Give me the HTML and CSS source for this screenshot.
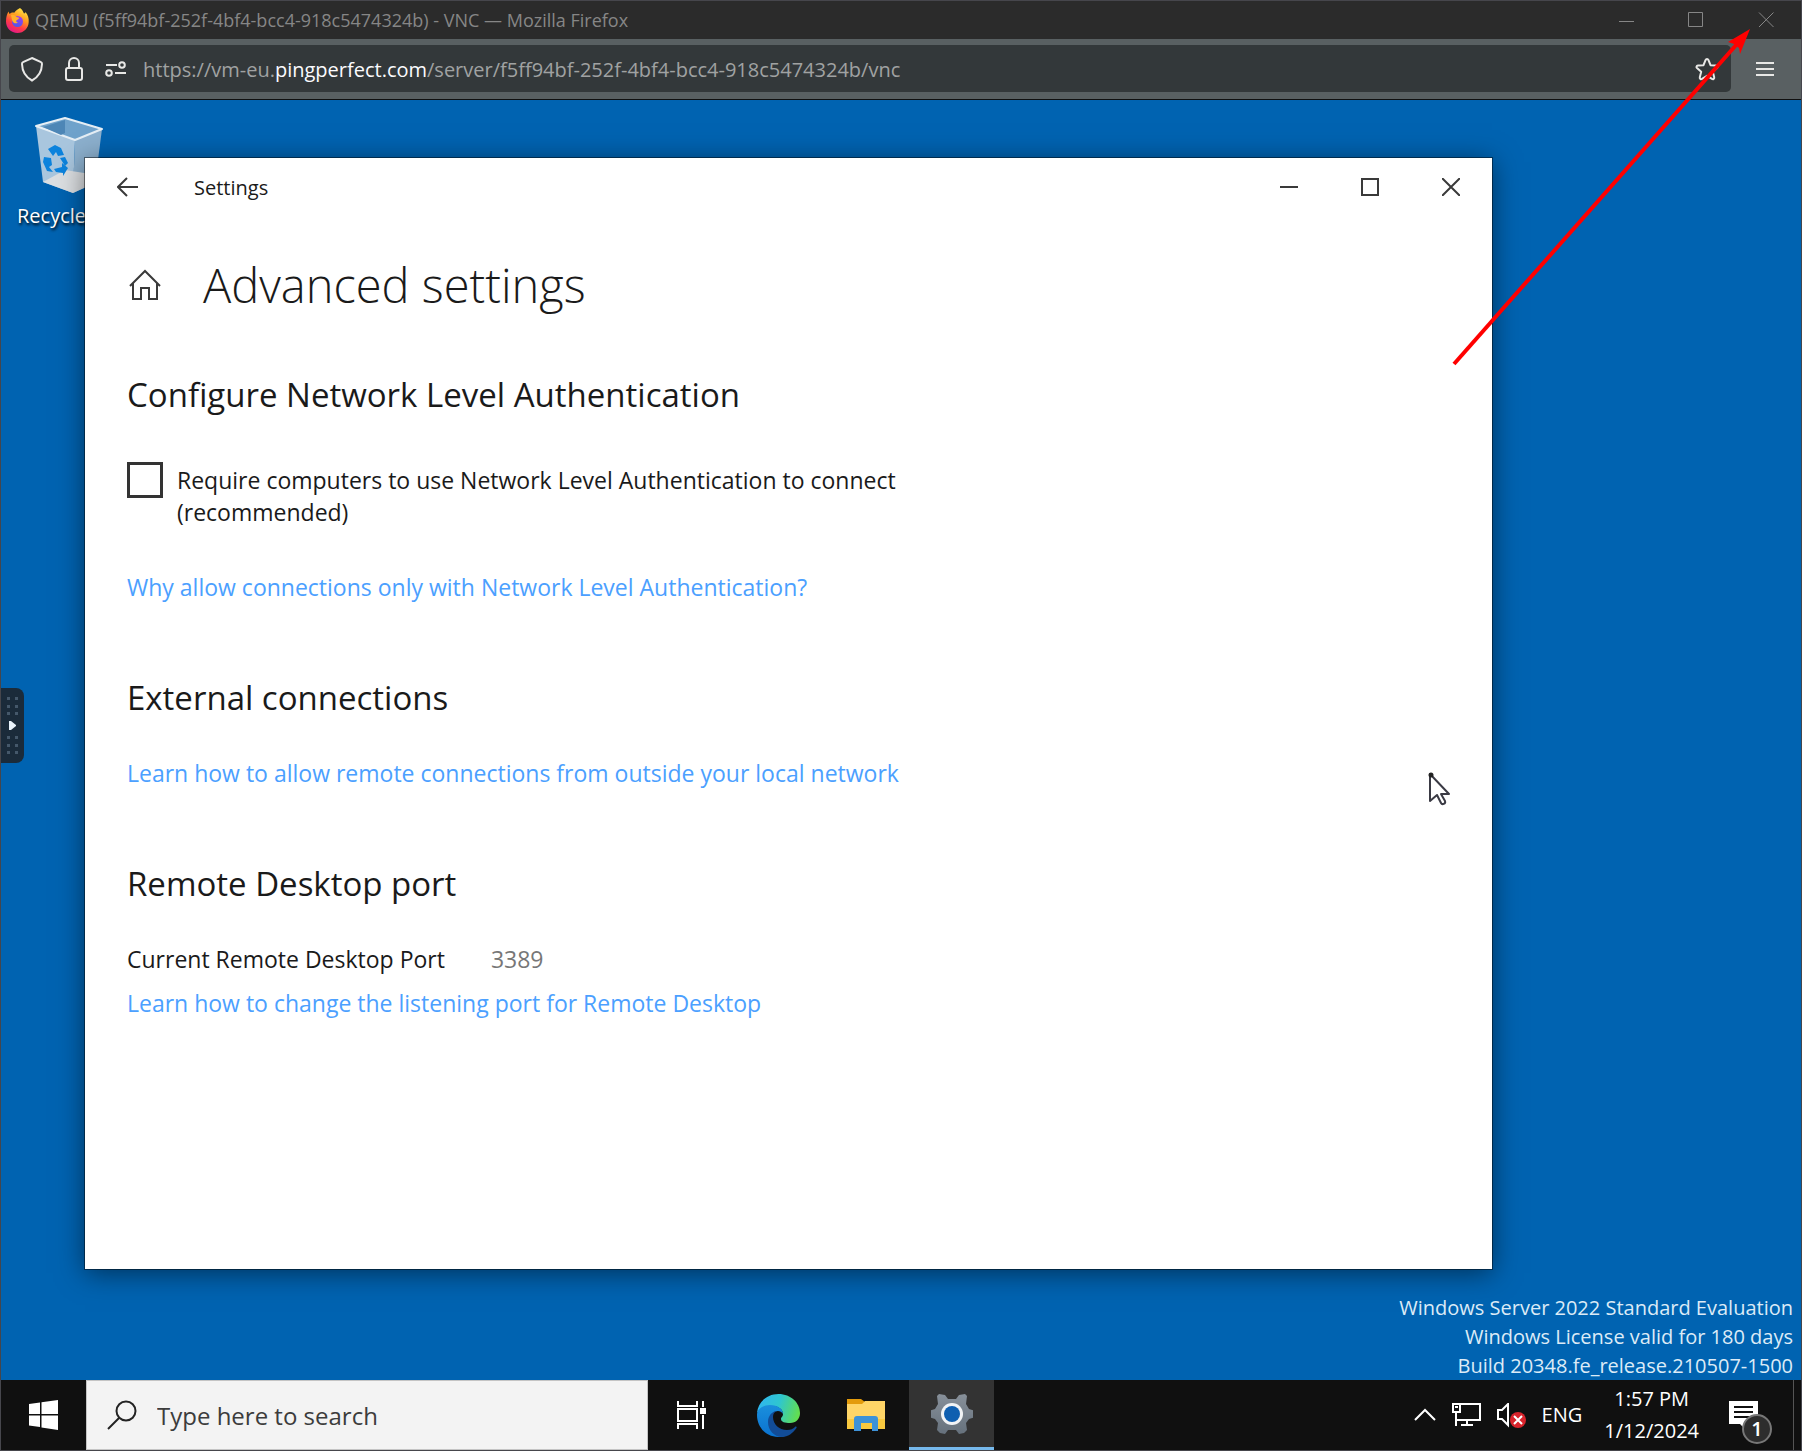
FILE: index.html
```html
<!DOCTYPE html>
<html lang="en">
<head>
<meta charset="utf-8">
<title>QEMU - VNC</title>
<link rel="stylesheet" href="styles.css">
</head>
<body>
<div class="browser">
  <header class="titlebar">
    <svg class="firefox" width="23" height="25" viewBox="0 0 23 25" aria-hidden="true">
      <defs>
        <linearGradient id="fxa" x1="0.8" y1="0" x2="0.3" y2="1"><stop offset="0" stop-color="#fff04a"/><stop offset="0.4" stop-color="#ff9a1f"/><stop offset="0.7" stop-color="#ff3a48"/><stop offset="1" stop-color="#e3168a"/></linearGradient>
        <linearGradient id="fxb" x1="0.6" y1="0" x2="0.3" y2="1"><stop offset="0" stop-color="#a03bf0"/><stop offset="1" stop-color="#4a5ae8"/></linearGradient>
      </defs>
      <path fill="url(#fxa)" d="M14 0c3 2 3 4 4 5.500c1-.2 1.500-1 1.500-1.500c2.500 3 3.500 6 3.200 10C22.500 20 18 25 11.500 25S0 20 0 13.500C0 9 1 6 2.500 3.500c.3 1.200.8 2 1.200 2.500c1.500-1.500 3-1.500 4.500-1.300c1.500-2.200 3.500-3.200 5.800-4.700z"/>
      <circle cx="11.500" cy="13.500" r="5.500" fill="url(#fxb)"/>
      <path fill="#ffb12a" d="M5 7c2.500-1 4.500.5 5.500 2c1.500.2 2.500.6 2.700 1.200c-.8 1.300-3 1.500-3 2.800c0 1 1 1.500 2 1.500c-1.500 1.500-5 1-6-2C5.500 10.500 5.500 9 5 7z"/>
    </svg>
    <span class="titlebar-text">QEMU (f5ff94bf-252f-4bf4-bcc4-918c5474324b) - VNC — Mozilla Firefox</span>
    <div class="browser-controls">
      <button type="button" aria-label="Minimize"><svg width="16" height="16" viewBox="0 0 16 16"><path d="M1 9.500h15"/></svg></button>
      <button type="button" aria-label="Maximize"><svg width="16" height="16" viewBox="0 0 16 16"><path d="M.5.500h14v14H.5z"/></svg></button>
      <button type="button" aria-label="Close"><svg width="16" height="16" viewBox="0 0 16 16"><path d="M1 .5l14.500 14.500M15.500 .5L1 15"/></svg></button>
    </div>
  </header>

  <div class="toolbar">
    <div class="urlbar">
      <button type="button" aria-label="Tracking protection"><svg width="24" height="26" viewBox="0 0 24 26"><path d="M12 2l9 4.200c.8.300 1 1 1 1.800c-.2 7-3.500 13-10 16.500C5.500 21 2.200 15 2 8c0-.8.200-1.500 1-1.800z"/></svg></button>
      <button type="button" aria-label="Site security"><svg width="20" height="26" viewBox="0 0 20 26"><rect x="2" y="12" width="16" height="12" rx="2"/><path d="M5 12V7a5 5 0 0 1 10 0v5"/></svg></button>
      <button type="button" aria-label="Site permissions"><svg width="24" height="18" viewBox="0 0 24 18"><path d="M2 5h11M11 13h11"/><circle cx="18" cy="5" r="2.800"/><circle cx="5" cy="13" r="2.800"/></svg></button>
      <a class="address" href="#">https://vm-eu.<b>pingperfect.com</b>/server/f5ff94bf-252f-4bf4-bcc4-918c5474324b/vnc</a>
      <button type="button" class="star" aria-label="Bookmark"><svg width="24" height="24" viewBox="0 0 24 24"><path stroke-linejoin="round" d="M12 2c.7 0 1.200.5 1.500 1.200l2 5l5.600.4c1.400.1 1.900 1.600.9 2.500l-4.200 3.600l1.400 5.600c.3 1.300-1 2.300-2.200 1.600L12 18.800l-5 3.100c-1.200.7-2.500-.3-2.200-1.600l1.400-5.600L2 11.100c-1-.9-.5-2.400.9-2.500l5.600-.4l2-5C10.800 2.500 11.300 2 12 2z"/></svg></button>
    </div>
    <button type="button" class="menu" aria-label="Menu"><svg width="18" height="16" viewBox="0 0 18 16"><path d="M0 2h18M0 8h18M0 14h18"/></svg></button>
  </div>

  <main class="desktop">
    <div class="recycle">
      <svg width="70" height="78" viewBox="0 0 70 78" aria-hidden="true">
        <path fill="#a9c6de" d="M2 10l39 14l-2 53L9 66z"/>
        <path fill="#8cb0ce" d="M41 24l27-11l-7 54l-22 10z"/>
        <path fill="#dcdfe2" d="M9 66l22-12l32 5l-2 8l-22 10z"/>
        <path fill="#6fa2cb" stroke="#e5eef5" stroke-width="2" stroke-linejoin="round" d="M2 10L31 2l37 11l-27 11z"/>
        <path fill="#4d86b6" d="M9 11l22-7v13l-4 2z"/>
        <g fill="#0c83dd"><path d="M14 33l7-4l6 3l3 7l-6 1l-2-4l-3 4z"/><path d="M10 41l7 1l1 7l-3 2l4 5l-6-1l-4-9z"/><path d="M20 53l8-2v-4l6 5l-5 8v-3l-7-1z"/><path d="M26 42l5-1l3 6l-3 3z"/></g>
      </svg>
      <span>Recycle Bin</span>
    </div>

    <button type="button" class="vnc-handle" aria-label="Show control bar">
      <svg width="24" height="75" viewBox="0 0 24 75">
        <g fill="#45586a"><path d="M7 9h3v3H7zM15 9h3v3h-3zM7 17h3v3H7zM15 17h3v3h-3zM7 24h3v3H7zM15 24h3v3h-3zM7 48h3v3H7zM15 48h3v3h-3zM7 56h3v3H7zM15 56h3v3h-3zM7 63h3v3H7zM15 63h3v3h-3z"/></g>
        <path fill="#e8f2fb" d="M9 33h2l5 4v1l-5 4H9z"/>
      </svg>
    </button>

    <section class="window">
      <div class="window-bar">
        <button type="button" class="back" aria-label="Back"><svg width="22" height="20" viewBox="0 0 22 20"><path d="M1 10h20M10 1l-9 9l9 9"/></svg></button>
        <span class="window-title">Settings</span>
        <div class="window-controls">
          <button type="button" aria-label="Minimize"><svg width="18" height="18" viewBox="0 0 18 18"><path d="M0 9h18"/></svg></button>
          <button type="button" aria-label="Maximize"><svg width="18" height="18" viewBox="0 0 18 18"><path d="M1 1h16v16H1z"/></svg></button>
          <button type="button" aria-label="Close"><svg width="18" height="18" viewBox="0 0 18 18"><path d="M0 0l18 18M18 0L0 18"/></svg></button>
        </div>
      </div>
      <div class="window-head">
        <svg width="32" height="32" viewBox="0 0 32 32" aria-hidden="true"><path d="M1 17L16 2l15 15M4 14v16h8V19h8v11h8V14"/></svg>
        <h1>Advanced settings</h1>
      </div>
      <h2>Configure Network Level Authentication</h2>
      <label class="check"><input type="checkbox"><span>Require computers to use Network Level Authentication to connect (recommended)</span></label>
      <a class="why" href="#">Why allow connections only with Network Level Authentication?</a>
      <h2>External connections</h2>
      <a class="external" href="#">Learn how to allow remote connections from outside your local network</a>
      <h2>Remote Desktop port</h2>
      <p class="port"><span>Current Remote Desktop Port</span><span class="value">3389</span></p>
      <a href="#">Learn how to change the listening port for Remote Desktop</a>
    </section>

    <p class="watermark">Windows Server 2022 Standard Evaluation<br>Windows License valid for 180 days<br>Build 20348.fe_release.210507-1500</p>

    <svg class="cursor" width="24" height="36" viewBox="0 0 24 36" aria-hidden="true"><path fill="#fff" stroke="#3a3a44" stroke-width="2" stroke-linejoin="round" d="M2 2v27l7-6l4 8c1 2 5 1 4-2l-4-7h8z"/><circle cx="3" cy="3" r="2.500" fill="#222"/></svg>
  </main>

  <footer class="taskbar">
    <button type="button" class="start" aria-label="Start"><svg width="29" height="30" viewBox="0 0 29 30"><path fill="#fff" d="M0 4l11-1.500v11.500H0zM12.500 2.200L29 0v14H12.500zM0 15.500h11v11.500L0 25.500zM12.500 15.500H29V30l-16.500-2.500z"/></svg></button>
    <label class="search">
      <svg width="30" height="30" viewBox="0 0 30 30" aria-hidden="true"><circle cx="19" cy="11" r="9.500"/><path d="M12 18L1 29"/></svg>
      <input type="text" placeholder="Type here to search" aria-label="Type here to search">
    </label>
    <button type="button" class="task" aria-label="Task view"><svg width="30" height="28" viewBox="0 0 30 28"><path fill="none" stroke="#fff" stroke-width="2" d="M1 0v5h19V0M1 28v-5h19v5M1 8h19v12H1zM26 0v6M26 14v14"/><path fill="#fff" d="M23 7h6v6h-6z"/></svg></button>
    <button type="button" class="task" aria-label="Microsoft Edge">
      <svg width="43" height="43" viewBox="0 0 43 43">
        <defs>
          <linearGradient id="ea" x1="0" y1="0.3" x2="1" y2="0.5"><stop offset="0" stop-color="#2fb5f0"/><stop offset="0.5" stop-color="#2fc6cf"/><stop offset="1" stop-color="#62de50"/></linearGradient>
          <linearGradient id="eb" x1="0.5" y1="0" x2="0.5" y2="1"><stop offset="0" stop-color="#1a8fdc"/><stop offset="1" stop-color="#0a72d0"/></linearGradient>
        </defs>
        <path fill="url(#ea)" d="M0 19C1 8 10 0 21.500 0C34 0 43 9 43 19c0 6-4 10-10 10c-5 0-9-1-9-4c0-2 2-2 2-5c0-5-5-8-11-8C8 12 2 15 0 19z"/>
        <path fill="url(#eb)" d="M0 21c0-6 6-10 13-10c8 0 13 4 13 9c-1-2-3-3-5-3c-5 0-8 5-8 10c0 8 7 15 15 15c-2 1-4 1-7 1C9 43 0 33 0 21z"/>
        <path fill="#124c97" d="M20 17c-3 1-4 3-4 6c0 7 6 13 14 13c4 0 6-1 8-3c1-1 2 0 1.500 1C36 39 31 43 25 43c-8 0-14-7-14-15c0-6 4-11 9-11z"/>
      </svg>
    </button>
    <button type="button" class="task" aria-label="File Explorer">
      <svg width="38" height="32" viewBox="0 0 38 32"><path fill="#e39b0c" d="M0 0h14l4 3v5H0z"/><path fill="#ffd567" d="M0 5h15l3-3h20v28H0z"/><path fill="#f9c93f" d="M0 20h38v10H0z"/><path fill="#3d92d8" d="M7 20c0-2 1-3 3-3h18c2 0 3 1 3 3v12h-6v-8H14v8H7z"/></svg>
    </button>
    <button type="button" class="task active" aria-label="Settings">
      <svg width="42" height="40" viewBox="-21 -20 42 40"><defs><linearGradient id="ga" x1="0" y1="0" x2="0" y2="1"><stop offset="0" stop-color="#87909a"/><stop offset="1" stop-color="#66717c"/></linearGradient></defs><path fill="url(#ga)" d="M-13-20l6 1l3 4h8l3-4l6-1l2 2l-1 8l3 5l6 2v6l-6 2l-3 4l1 7l-3 3l-5 1l-3-4h-8l-3 4l-5-1l-3-3l1-7l-3-4l-6-2v-6l6-2l3-5l-1-8z"/><circle r="11" fill="#f1f3f5"/><circle r="8" fill="#0f5fb0"/></svg>
    </button>
    <div class="tray">
      <button type="button" aria-label="Show hidden icons"><svg width="22" height="14" viewBox="0 0 22 14"><path d="M1 12L11 2l10 10"/></svg></button>
      <button type="button" aria-label="Network"><svg width="29" height="24" viewBox="0 0 29 24"><path d="M9 1h19v16H5M15 17v5M9 22h12M1 1h7v8H1zM4 9v14M3 4h3"/></svg></button>
      <button type="button" aria-label="Volume muted"><svg width="29" height="25" viewBox="0 0 29 25"><path d="M1 7h4l6-6v21l-6-6H1z"/><circle cx="21" cy="17" r="8" fill="#d9242c" stroke="none"/><path d="M17 13l8 8M25 13l-8 8"/></svg></button>
      <button type="button" class="lang">ENG</button>
      <button type="button" class="clock">1:57 PM<br>1/12/2024</button>
      <button type="button" class="notes" aria-label="Notifications"><svg width="44" height="44" viewBox="0 0 44 44"><path fill="#fff" stroke="none" d="M0 1h29v23H17v6l-6-6H0z"/><path stroke="#111" d="M5 7h19M5 12h19M5 17h19"/><circle cx="28" cy="29" r="14" fill="#2d2d2d" stroke="#777"/></svg><span>1</span></button>
    </div>
  </footer>

  <svg class="arrow" width="402" height="380" viewBox="0 0 402 380" aria-hidden="true"><path stroke="#f00" stroke-width="4" d="M54 364L337 44"/><path fill="#f00" d="M350 29L328 42l6 2l5 4l1 6z"/></svg>
</div>
</body>
</html>
```
FILE: styles.css
```css
* { box-sizing: border-box; }
body { margin: 0; font-family: "Open Sans", "Noto Sans", sans-serif; color: #1a1a1a; }
h1, h2, p { margin: 0; font-weight: 400; }
button { border: 0; padding: 0; background: none; font: inherit; color: inherit; display: flex; align-items: center; justify-content: center; }
svg { display: block; flex: none; }
a { text-decoration: none; }

.browser { position: relative; min-height: 100vh; display: flex; flex-direction: column; border: 1px solid #46464c; }

.titlebar { display: flex; align-items: center; height: 38px; padding-left: 5px; background: #2b2b2b; color: #868686; }
.titlebar-text { margin-left: 6px; font-size: 18px; line-height: 24px; }
.browser-controls { display: flex; margin-left: auto; }
.browser-controls button { width: 70px; height: 38px; }
.browser-controls svg { fill: none; stroke: #868686; }

.toolbar { display: flex; height: 61px; padding: 6px 0 7px 8px; background: #596062; border-bottom: 1px solid #101010; }
.urlbar { flex: 1; display: flex; align-items: center; padding: 0 12px 0 11px; border-radius: 5px; background: #33383a; }
.urlbar svg, .menu svg { fill: none; stroke: #e8e8e6; stroke-width: 2; }
.urlbar button + button { margin-left: 20px; }
.address { margin: 0 auto 0 15px; padding-top: 3px; font-size: 20px; line-height: 28px; color: #a0a2a2; }
.address b { font-weight: 400; color: #fbfbfe; }
.menu { width: 70px; padding-right: 2px; }

.desktop { position: relative; flex: 1; overflow: hidden; background: #0063b1; }
.recycle { position: absolute; left: 16px; top: 16px; display: flex; flex-direction: column; gap: 8px; color: #fff; font-size: 20px; line-height: 28px; white-space: nowrap; text-shadow: 1px 2px 3px #000; }
.recycle svg { margin-left: 17px; }
.vnc-handle { position: absolute; left: -1px; top: 588px; border-radius: 0 8px 8px 0; background: #1b2b3a; }

.window { position: absolute; inset: 58px 309px 111px 84px; padding: 0 42px; background: #fff; box-shadow: 0 0 0 1px rgba(0, 0, 0, .45), 0 4px 26px rgba(0, 0, 0, .5); font-size: 23px; line-height: 32px; }
.window-bar { display: flex; align-items: center; height: 57px; margin: 0 -42px; padding-left: 32px; }
.window-title { margin-left: 55px; padding-top: 2px; font-size: 20px; line-height: 28px; }
.window-bar svg { fill: none; stroke: #3a3a3a; stroke-width: 2; }
.window-controls { display: flex; margin-left: auto; padding-right: 1px; }
.window-controls button { width: 81px; height: 57px; }
.window-head { display: flex; align-items: center; gap: 42px; margin-top: 38px; padding-left: 2px; }
.window-head svg { fill: none; stroke: #3a3a3a; stroke-width: 2; }
h1 { font-size: 47px; line-height: 64px; font-weight: 300; }
h2 { margin-top: 73px; font-size: 33px; line-height: 44px; }
.window-head + h2 { margin-top: 56px; }
.window a { display: block; color: #4ba0ff; }
.check { display: flex; align-items: flex-start; gap: 14px; width: 790px; margin-top: 45px; }
.check input { appearance: none; flex: none; width: 36px; height: 36px; margin: 0; border: 3px solid #333; }
.check span { padding-top: 2px; }
.window .why { margin-top: 43px; }
.window .external { margin-top: 37px; }
.port { display: flex; gap: 46px; margin: 37px 0 12px; }
.port .value { color: #777; }

.watermark { position: absolute; right: 8px; bottom: 0; color: #dcebf7; font-size: 20px; line-height: 29px; text-align: right; }
.cursor { position: absolute; right: 349px; top: 672px; }

.taskbar { display: flex; height: 70px; background: #101010; color: #fff; }
.start { width: 85px; }
.search { display: flex; align-items: center; gap: 20px; width: 562px; padding-left: 20px; border: 1px solid #c4c4c4; background: #f3f3f3; }
.search svg { fill: none; stroke: #222; stroke-width: 2; }
.search input { flex: 1; min-width: 0; border: 0; padding: 2px 0 0; background: none; font: inherit; font-size: 24px; line-height: 32px; }
.search input::placeholder { color: #3c3c3c; opacity: 1; }
.task { width: 87px; }
.active { width: 85px; background: #333; border-bottom: 3px solid #76b9ed; }
.tray { display: flex; align-items: center; margin: 0 7px 0 auto; padding-right: 20px; font-size: 20px; line-height: 32px; border-right: 1px solid #555; }
.tray svg { fill: none; stroke: #fff; stroke-width: 2; }
.tray button + button { margin-left: 16px; }
.tray .clock { margin-left: 22px; }
.tray .clock + .notes { position: relative; margin: 14px 0 0 30px; }
.notes span { position: absolute; left: 14px; top: 15px; width: 28px; text-align: center; font-size: 20px; line-height: 28px; font-weight: 600; }

.arrow { position: absolute; right: -1px; top: -1px; fill: none; pointer-events: none; }
```
